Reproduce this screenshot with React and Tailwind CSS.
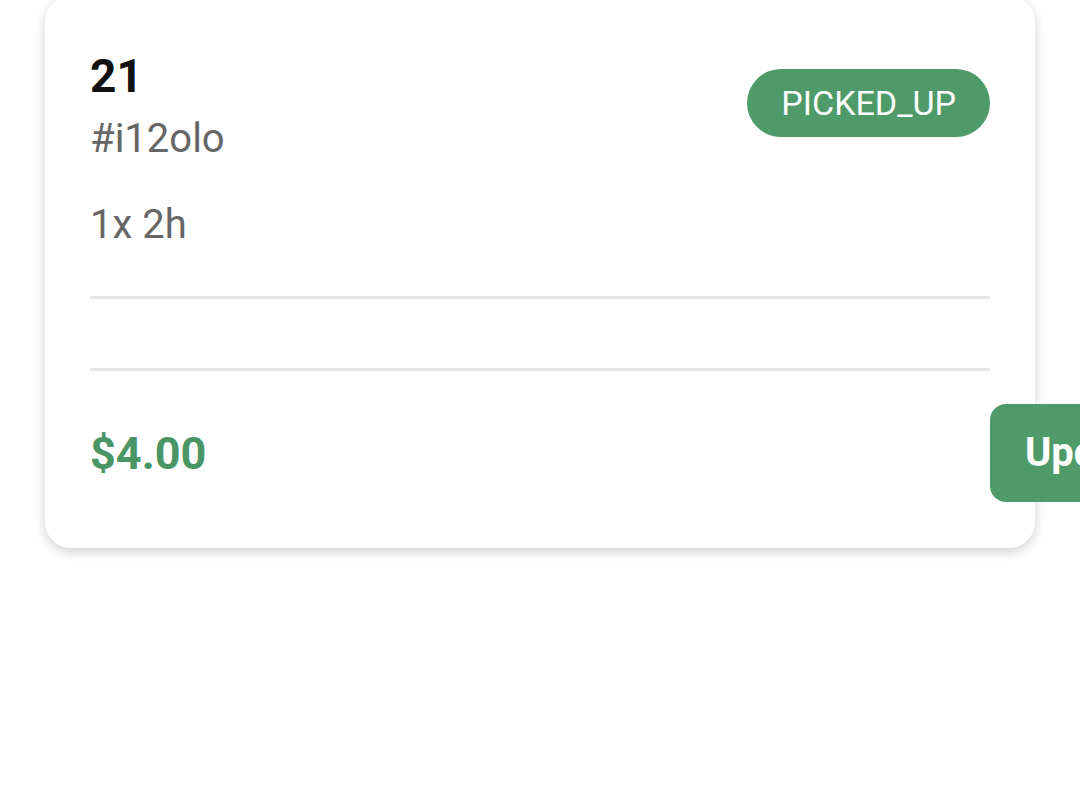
export default function App() {
  return (
    <div
      className="w-full min-h-[810px] bg-white overflow-hidden"
      style={{ fontFamily: "Roboto, 'Liberation Sans', sans-serif" }}
    >
      <div className="mx-[45px] -mt-[4px] rounded-[26px] bg-white shadow-[0_4px_12px_rgba(0,0,0,0.18)] px-[45px] pt-[57px] pb-[46px]">
        <div className="flex items-start justify-between">
          <div className="flex flex-col">
            <div className="text-[46px] leading-none font-bold text-[#111]">21</div>
            <div className="mt-[20px] text-[40px] leading-none text-[#666]">#i12olo</div>
          </div>
          <div className="mt-[16px] h-[68px] px-[34px] rounded-full bg-[#4e9a69] flex items-center text-[34px] font-normal text-white">
            PICKED_UP
          </div>
        </div>
        <div className="mt-[46px] text-[40px] leading-none text-[#666]">1x 2h</div>
        <div className="mt-[51px] h-[3px] bg-[#e6e6e6]" />
        <div className="mt-[69px] h-[3px] bg-[#e6e6e6]" />
        <div className="mt-[33px] flex items-center">
          <div className="w-full shrink-0 text-[45px] font-bold text-[#4a9565] leading-none">$4.00</div>
          <button className="shrink-0 h-[98px] px-[35px] rounded-[16px] bg-[#4e9a69] text-white text-[40px] font-bold">
            Update
          </button>
        </div>
      </div>
    </div>
  );
}
